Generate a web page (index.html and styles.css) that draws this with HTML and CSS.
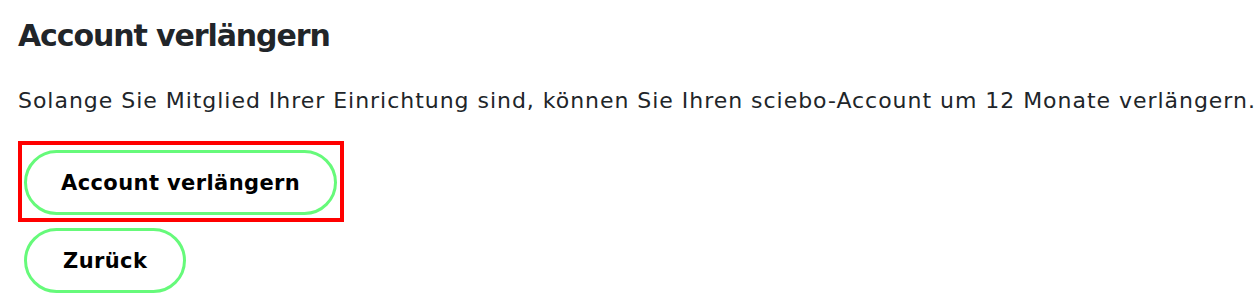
FILE: index.html
```html
<!DOCTYPE html>
<html lang="de">
<head>
<meta charset="UTF-8">
<meta name="viewport" content="width=device-width, initial-scale=1.0">
<title>Account verlängern</title>
<link rel="stylesheet" href="styles.css">
</head>
<body>
<div class="content">
    <h2 class="title">Account verlängern</h2>
    <p class="info">Solange Sie Mitglied Ihrer Einrichtung sind, können Sie Ihren sciebo-Account um 12 Monate verlängern.</p>
    <div class="actions">
        <div class="focus-ring">
            <button class="btn" type="submit">Account verlängern</button>
        </div>
        <button class="btn btn-back" type="button">Zurück</button>
    </div>
</div>
</body>
</html>
```

FILE: styles.css
```css
body {
    margin: 0;
    font-family: "DejaVu Sans", "Noto Sans", sans-serif;
    color: #212529;
    background: #fff;
}

.content {
    padding: 16px 0 0 18px;
}

.title {
    font-size: 30px;
    font-weight: bold;
    letter-spacing: -1.1px;
    line-height: 40px;
    margin: 0;
}

.info {
    font-size: 22px;
    letter-spacing: 0.97px;
    line-height: 30px;
    margin: 30px 0 0 0;
    white-space: nowrap;
}

.actions {
    display: flex;
    flex-direction: column;
    align-items: flex-start;
    gap: 6px;
    margin-top: 25px;
}

.focus-ring {
    border: 4px solid #ff0000;
    padding: 5px 3px 3px 2px;
}

.btn {
    display: block;
    font-family: inherit;
    font-size: 21px;
    font-weight: bold;
    letter-spacing: 0.4px;
    color: #000;
    background: #fff;
    border: 3.5px solid #66fa7a;
    border-radius: 33px;
    height: 65px;
    padding: 0 34px;
}

.btn-back {
    margin-left: 6px;
    padding: 0 36px;
}
```
